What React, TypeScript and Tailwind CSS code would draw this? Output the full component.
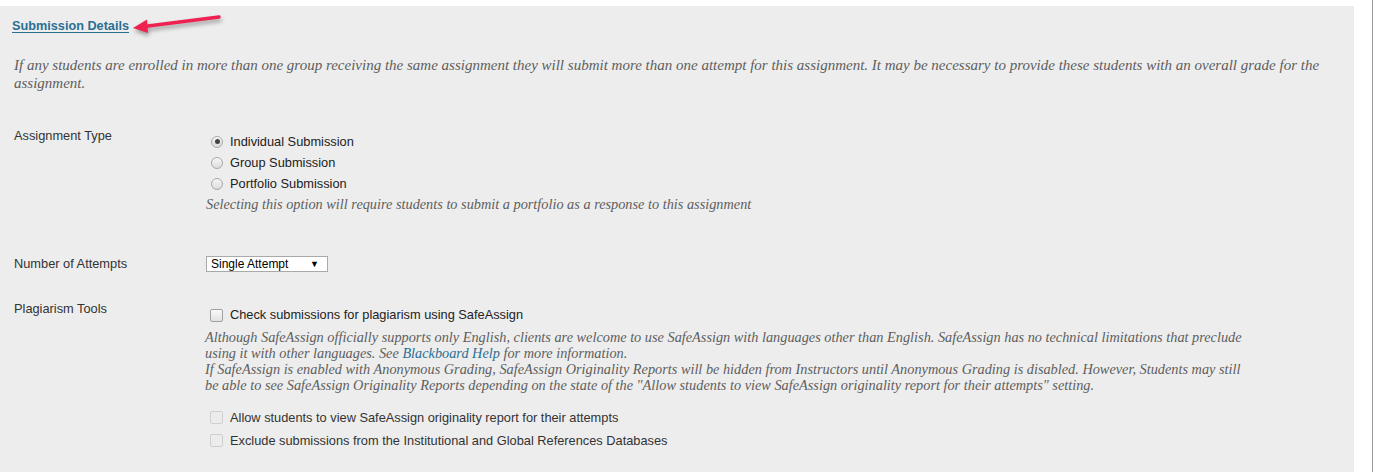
import React from "react";

const sans = { fontFamily: '"Liberation Sans", Arial, sans-serif' };
const serif = { fontFamily: '"Liberation Serif", Georgia, serif' };

function Radio({ checked }: { checked?: boolean }) {
  return (
    <span className="w-[12px] h-[12px] rounded-full border border-[#a8a8a8] bg-gradient-to-b from-[#f6f6f6] to-[#dcdcdc] flex items-center justify-center shrink-0">
      {checked && <span className="w-[5px] h-[5px] rounded-full bg-[#444]" />}
    </span>
  );
}

function Check({ disabled }: { disabled?: boolean }) {
  return (
    <span
      className={
        "w-[13px] h-[13px] rounded-[2px] border shrink-0 " +
        (disabled
          ? "border-[#cfcfcf] bg-[#ececec]"
          : "border-[#a0a0a0] bg-gradient-to-b from-[#fafafa] to-[#e2e2e2]")
      }
    />
  );
}

export default function App() {
  return (
    <div className="relative w-[1373px] h-[472px] bg-white border-r border-[#9a9a9a] overflow-hidden" style={sans}>
      <div className="pt-[6px] w-[1354px] h-full">
        <div className="bg-[#ededed] h-full">
          {/* Heading */}
          <div className="pt-[12px] pl-[12px] text-[12.7px] leading-[16px]">
            <span className="font-bold text-[#2b6f93] underline underline-offset-2">Submission Details</span>
          </div>

          <p className="mt-[22px] pl-[14px] text-[15px] leading-[18px] italic text-[#5e5e5e] whitespace-nowrap" style={serif}>
            If any students are enrolled in more than one group receiving the same assignment they will submit more than one attempt for this assignment. It may be necessary to provide these students with an overall grade for the
            <br />
            assignment.
          </p>

          {/* Assignment Type */}
          <div className="mt-[36px] flex items-start pl-[14px] text-[12.8px] leading-[16px] text-[#333]">
            <div className="w-[192px]">Assignment Type</div>
            <div className="pt-[3px]">
              <div className="flex items-center h-[21px] pl-[5px] gap-[7px] text-[#222]">
                <Radio checked />
                <span>Individual Submission</span>
              </div>
              <div className="flex items-center h-[21px] pl-[5px] gap-[7px] text-[#222]">
                <Radio />
                <span>Group Submission</span>
              </div>
              <div className="flex items-center h-[21px] pl-[5px] gap-[7px] text-[#222]">
                <Radio />
                <span>Portfolio Submission</span>
              </div>
              <div className="mt-[2px] text-[14.3px] leading-[16px] italic text-[#5e5e5e] whitespace-nowrap" style={serif}>
                Selecting this option will require students to submit a portfolio as a response to this assignment
              </div>
            </div>
          </div>

          {/* Number of Attempts */}
          <div className="mt-[44px] flex items-center pl-[14px] text-[12.8px] leading-[16px] text-[#333]">
            <div className="w-[192px]">Number of Attempts</div>
            <div className="w-[122px] h-[16px] bg-white border border-[#a9a9a9] flex items-center justify-between pl-[4px] pr-[8px] text-[12px] text-black">
              <span>Single Attempt</span>
              <span className="text-[9px]">▼</span>
            </div>
          </div>

          {/* Plagiarism Tools */}
          <div className="mt-[29px] flex items-start pl-[14px] text-[12.8px] leading-[16px] text-[#333]">
            <div className="w-[191px]">Plagiarism Tools</div>
            <div className="pt-[4px]">
              <div className="flex items-center h-[20px] pl-[5px] gap-[7px] text-[#222]">
                <Check />
                <span>Check submissions for plagiarism using SafeAssign</span>
              </div>
              <div className="mt-[4px] text-[14.3px] leading-[16px] italic text-[#5e5e5e] whitespace-nowrap" style={serif}>
                Although SafeAssign officially supports only English, clients are welcome to use SafeAssign with languages other than English. SafeAssign has no technical limitations that preclude
                <br />
                using it with other languages. See <span className="text-[#2b6f93]">Blackboard Help</span> for more information.
                <br />
                If SafeAssign is enabled with Anonymous Grading, SafeAssign Originality Reports will be hidden from Instructors until Anonymous Grading is disabled. However, Students may still
                <br />
                be able to see SafeAssign Originality Reports depending on the state of the "Allow students to view SafeAssign originality report for their attempts" setting.
              </div>
              <div className="mt-[13px] flex items-center h-[23px] pl-[5px] gap-[7px] text-[#333]">
                <Check disabled />
                <span>Allow students to view SafeAssign originality report for their attempts</span>
              </div>
              <div className="flex items-center h-[23px] pl-[5px] gap-[7px] text-[#333]">
                <Check disabled />
                <span>Exclude submissions from the Institutional and Global References Databases</span>
              </div>
            </div>
          </div>
        </div>
      </div>

      {/* Annotation arrow */}
      <svg
        className="absolute left-[130px] top-[8px]"
        width="100"
        height="34"
        viewBox="0 0 100 34"
        style={{ filter: "drop-shadow(1px 3px 2px rgba(0,0,0,0.35))" }}
      >
        <line x1="89" y1="9" x2="14" y2="18.5" stroke="#ee2150" strokeWidth="3.4" strokeLinecap="round" />
        <polygon points="3,20 17,11.5 18,25" fill="#ee2150" />
      </svg>
    </div>
  );
}
